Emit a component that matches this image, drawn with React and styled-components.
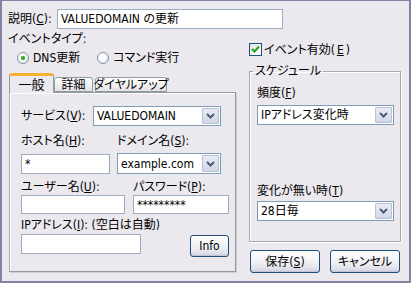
import React from 'react';
import styled, { createGlobalStyle } from 'styled-components';

const Global = createGlobalStyle`
  html, body { margin: 0; padding: 0; background: #ebe8ee; }
  body {
    font-family: "DejaVu Sans Condensed", "Noto Sans CJK JP", sans-serif;
    font-size: 12px;
    color: #000;
    font-feature-settings: "palt";
  }
  * { box-sizing: border-box; }
`;

const Window = styled.div`
  width: 411px;
  height: 283px;
  background: #ebe8ee;
  border-style: solid;
  border-color: #8481a3;
  border-width: 1px 2px 2px 2px;
  padding: 8px 0 0 6px;
  display: flex;
  flex-direction: column;
  line-height: 14px;
`;

const Row = styled.div`
  display: flex;
  align-items: ${p => p.$align || 'center'};
  margin-top: ${p => p.$mt || 0}px;
  margin-left: ${p => p.$ml || 0}px;
`;

const Label = styled.div`
  width: ${p => (p.$w ? `${p.$w}px` : 'auto')};
  margin-top: ${p => p.$mt || 0}px;
  white-space: nowrap;
  flex-shrink: 0;
`;

const TextBox = styled.div`
  width: ${p => p.$w}px;
  height: ${p => p.$h || 20}px;
  border: 1px solid #9badc3;
  background: #fff;
  padding: 0 3px;
  display: flex;
  align-items: center;
  margin-right: ${p => p.$mr || 0}px;
  flex-shrink: 0;
  white-space: nowrap;
  overflow: hidden;
`;

const Main = styled.div`
  display: flex;
`;

const LeftCol = styled.div`
  width: 229px;
  display: flex;
  flex-direction: column;
`;

const RightCol = styled.div`
  width: 152px;
  margin-left: 12px;
  display: flex;
  flex-direction: column;
`;

const RadioRow = styled.div`
  display: flex;
  align-items: center;
  height: 13px;
  margin-top: 5px;
  padding-left: 9px;
`;

const RadioItem = styled.label`
  display: flex;
  align-items: center;
  width: ${p => (p.$w ? `${p.$w}px` : 'auto')};
  gap: 4px;
  white-space: nowrap;
`;

const RadioCircle = styled.span`
  width: 12px;
  height: 12px;
  border-radius: 50%;
  border: 1px solid #7f93ad;
  background: radial-gradient(circle at 40% 40%, #ffffff 30%, #dcdbe4 100%);
  display: flex;
  align-items: center;
  justify-content: center;
  &::after {
    content: '';
    width: 4px;
    height: 4px;
    border-radius: 50%;
    background: ${p => (p.$on ? '#2ab02e' : 'transparent')};
    box-shadow: ${p => (p.$on ? '0 0 1px #5ccf5e' : 'none')};
  }
`;

const Tabs = styled.div`
  margin-top: 9px;
  margin-left: 1px;
  display: flex;
  flex-direction: column;
`;

const TabStrip = styled.div`
  display: flex;
  align-items: flex-end;
  height: 19px;
`;

const Tab = styled.div`
  width: ${p => p.$w}px;
  margin-left: ${p => p.$ml || 0}px;
  height: ${p => (p.$active ? 20 : 15)}px;
  margin-bottom: ${p => (p.$active ? -1 : 0)}px;
  position: relative;
  z-index: ${p => (p.$active ? 2 : 1)};
  border: 1px solid #919b9c;
  border-bottom: ${p => (p.$active ? 'none' : '1px solid #919b9c')};
  border-top: ${p => (p.$active ? '3px solid #f5b333' : '1px solid #919b9c')};
  border-radius: 3px 3px 0 0;
  background: ${p => (p.$active ? '#ebe8ee' : 'linear-gradient(#ffffff, #f0eff2 60%, #e2e0e8)')};
  display: flex;
  align-items: center;
  justify-content: center;
  padding-top: ${p => (p.$active ? 1 : 0)}px;
  white-space: nowrap;
  font-size: ${p => (p.$active ? 13 : 12)}px;
`;

const Panel = styled.div`
  width: 227px;
  height: 180px;
  border: 1px solid #919b9c;
  border-left-color: #a7b0b1;
  box-shadow: inset 1px 1px 0 #ffffff, 1px 1px 0 #d0cfd6;
  padding: 13px 0 0 11px;
  display: flex;
  flex-direction: column;
`;

const Select = styled.div`
  width: ${p => p.$w}px;
  height: ${p => p.$h || 20}px;
  border: 1px solid #7f9db9;
  background: #fff;
  display: flex;
  align-items: stretch;
  padding: 1px;
  flex-shrink: 0;
`;

const SelectText = styled.div`
  flex: 1;
  display: flex;
  align-items: center;
  padding-left: 2px;
  white-space: nowrap;
  overflow: hidden;
`;

const ArrowBtn = styled.div`
  width: 17px;
  border: 1px solid #b5c1d9;
  border-radius: 1px;
  background: linear-gradient(#e9ecf5, #d2d7e6);
  display: flex;
  align-items: center;
  justify-content: center;
`;

const Button = styled.div`
  width: ${p => p.$w}px;
  height: ${p => p.$h}px;
  margin-left: ${p => p.$ml || 0}px;
  margin-top: ${p => p.$mt || 0}px;
  border: 1px solid #1d4f7c;
  border-radius: 3px;
  background: linear-gradient(#ffffff, #f3f3f6 45%, #e3e3ec 80%, #cfd0e1);
  box-shadow: inset 0 -1px 0 #c2c4d8;
  display: flex;
  align-items: center;
  justify-content: center;
  white-space: nowrap;
  flex-shrink: 0;
`;

const CheckRow = styled.label`
  display: flex;
  align-items: center;
  gap: 2px;
  margin-top: 14px;
  height: 13px;
  white-space: nowrap;
`;

const CheckBox = styled.span`
  width: 13px;
  height: 13px;
  border: 1px solid #1c5180;
  background: linear-gradient(135deg, #e3e3df, #ffffff);
  display: flex;
  align-items: center;
  justify-content: center;
`;

const Group = styled.fieldset`
  margin: 8px 0 0 0;
  padding: 0 0 0 7px;
  width: 152px;
  height: 178px;
  border: 1px solid #a9a6b1;
  box-shadow: inset 1px 1px 0 #ffffff, 1px 1px 0 #ffffff;
  display: flex;
  flex-direction: column;
`;

const Legend = styled.legend`
  padding: 0 2px;
  margin-left: -4px;
  line-height: 14px;
`;

const ButtonRow = styled.div`
  display: flex;
  margin-top: 8px;
  margin-left: 1px;
  gap: 10px;
`;

const Chevron = () => (
  <svg width="9" height="6" viewBox="0 0 9 6">
    <path d="M1 1 L4.5 4.5 L8 1" fill="none" stroke="#4c5a78" strokeWidth="2" />
  </svg>
);

const Check = () => (
  <svg width="9" height="9" viewBox="0 0 9 9">
    <path d="M1 4 L3.5 6.5 L8 1.5" fill="none" stroke="#21a121" strokeWidth="2" />
  </svg>
);

const Combo = ({ w, h, children }) => (
  <Select $w={w} $h={h}>
    <SelectText>{children}</SelectText>
    <ArrowBtn><Chevron /></ArrowBtn>
  </Select>
);

export default function App() {
  return (
    <>
      <Global />
      <Window>
        <Row style={{ height: 20 }}>
          <Label $w={49}>説明(<u>C</u>):</Label>
          <TextBox $w={226}>VALUEDOMAIN の更新</TextBox>
        </Row>
        <Main>
          <LeftCol>
            <Label $mt={3}>イベントタイプ:</Label>
            <RadioRow>
              <RadioItem $w={80}><RadioCircle $on />DNS更新</RadioItem>
              <RadioItem><RadioCircle />コマンド実行</RadioItem>
            </RadioRow>
            <Tabs>
              <TabStrip>
                <Tab $w={45} $active>一般</Tab>
                <Tab $w={39}>詳細</Tab>
                <Tab $w={72} $ml={2}>ダイヤルアップ</Tab>
              </TabStrip>
              <Panel>
                <Row>
                  <Label $w={72}>サービス(<u>V</u>):</Label>
                  <Combo w={128}>VALUEDOMAIN</Combo>
                </Row>
                <Row $mt={8}>
                  <Label $w={96}>ホスト名(<u>H</u>):</Label>
                  <Label>ドメイン名(<u>S</u>):</Label>
                </Row>
                <Row $mt={5} $align="flex-end">
                  <TextBox $w={89} $mr={7}>*</TextBox>
                  <Combo w={104} h={21}>example.com</Combo>
                </Row>
                <Row $mt={6}>
                  <Label $w={112}>ユーザー名(<u>U</u>):</Label>
                  <Label>パスワード(<u>P</u>):</Label>
                </Row>
                <Row $mt={1}>
                  <TextBox $w={104} $h={19} $mr={8}></TextBox>
                  <TextBox $w={96} $h={19}>*********</TextBox>
                </Row>
                <Label $mt={4}>IPアドレス(<u>I</u>): (空白は自動)</Label>
                <Row $mt={2} $align="flex-start">
                  <TextBox $w={120}></TextBox>
                  <Button $w={39} $h={22} $ml={49} $mt={1}>Info</Button>
                </Row>
              </Panel>
            </Tabs>
          </LeftCol>
          <RightCol>
            <CheckRow><CheckBox><Check /></CheckBox>イベント有効(<u>E</u>)</CheckRow>
            <Group>
              <Legend>スケジュール</Legend>
              <Label $mt={8}>頻度(<u>F</u>)</Label>
              <Row $mt={5}><Combo w={137}>IPアドレス変化時</Combo></Row>
              <Label $mt={59}>変化が無い時(<u>T</u>)</Label>
              <Row $mt={3}><Combo w={137}>28日毎</Combo></Row>
            </Group>
            <ButtonRow>
              <Button $w={70} $h={23}>保存(<u>S</u>)</Button>
              <Button $w={70} $h={23}>キャンセル</Button>
            </ButtonRow>
          </RightCol>
        </Main>
      </Window>
    </>
  );
}
